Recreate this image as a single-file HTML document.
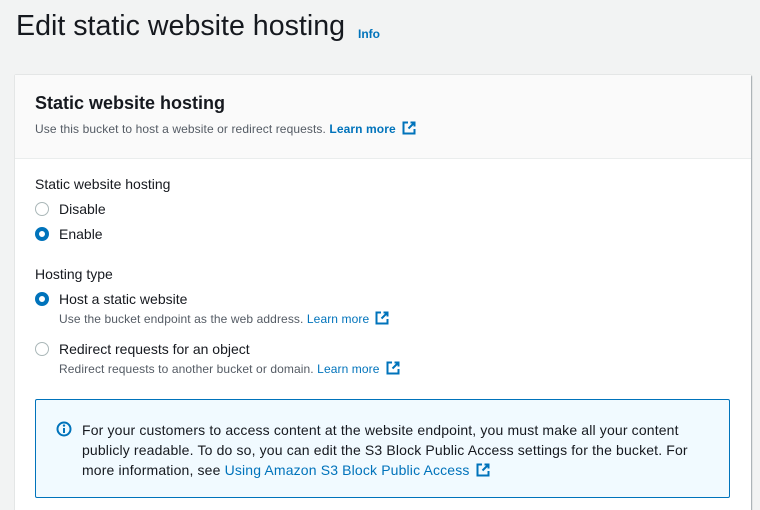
<!DOCTYPE html>
<html><head><meta charset="utf-8"><style>
*{margin:0;padding:0;box-sizing:border-box}
html,body{width:760px;height:510px;overflow:hidden}
body{background:#f2f3f3;font-family:"Liberation Sans",sans-serif;color:#16191f;position:relative}
.a{position:absolute;white-space:nowrap}
.card{position:absolute;left:15px;top:75px;width:736px;height:460px;background:#fff;box-shadow:1px 1px 1px rgba(0,28,36,.3),0 0 1px rgba(0,28,36,.3)}
.hdr{position:absolute;left:0;top:0;width:100%;height:84px;background:#fafafa;border-bottom:1px solid #eaeded}
.r{position:absolute;width:14px;height:14px;border-radius:50%;border:1px solid #aab7b8;background:#fff}
.r.on{border:4px solid #0073bb}
.lk{color:#0073bb}
.s{font-size:12px;color:#545b64;letter-spacing:.1px}
.ext{display:inline-block;vertical-align:-2px;margin-left:6px}
</style></head><body>
<div class="a" style="left:16px;top:10px;font-size:28.6px;">Edit static website hosting</div>
<div class="a lk" style="left:358px;top:27px;font-size:12px;font-weight:bold">Info</div>
<div class="card">
<div class="hdr"></div>
<div class="a" style="left:20px;top:18px;font-size:18px;font-weight:bold">Static website hosting</div>
<div class="a s" style="left:20px;top:46px">Use this bucket to host a website or redirect requests. <b class="lk">Learn more</b><svg class="ext" width="14" height="14" viewBox="0 0 14 14"><path d="M6 1.5H1.5v11h11V8M8.5 1.5h4v4M12.5 1.5L6.5 7.5" fill="none" stroke="#0073bb" stroke-width="2"/></svg></div>
<div class="a" style="left:20px;top:101px;font-size:14px">Static website hosting</div>
<div class="r" style="left:20px;top:127px"></div><div class="a" style="left:44px;top:126px;font-size:14px">Disable</div>
<div class="r on" style="left:20px;top:152px"></div><div class="a" style="left:44px;top:151px;font-size:14px">Enable</div>
<div class="a" style="left:20px;top:191px;font-size:14px">Hosting type</div>
<div class="r on" style="left:20px;top:217px"></div><div class="a" style="left:44px;top:216px;font-size:14px">Host a static website</div>
<div class="a s" style="left:44px;top:236px">Use the bucket endpoint as the web address. <span class="lk">Learn more</span><svg class="ext" width="14" height="14" viewBox="0 0 14 14"><path d="M6 1.5H1.5v11h11V8M8.5 1.5h4v4M12.5 1.5L6.5 7.5" fill="none" stroke="#0073bb" stroke-width="2"/></svg></div>
<div class="r" style="left:20px;top:267px"></div><div class="a" style="left:44px;top:266px;font-size:14px">Redirect requests for an object</div>
<div class="a s" style="left:44px;top:286px">Redirect requests to another bucket or domain. <span class="lk">Learn more</span><svg class="ext" width="14" height="14" viewBox="0 0 14 14"><path d="M6 1.5H1.5v11h11V8M8.5 1.5h4v4M12.5 1.5L6.5 7.5" fill="none" stroke="#0073bb" stroke-width="2"/></svg></div>
<div style="position:absolute;left:20px;top:324px;width:695px;height:99px;background:#f1faff;border:1px solid #0073bb;border-radius:2px"></div>
<svg class="a" style="left:41px;top:346px" width="16" height="16" viewBox="0 0 16 16"><circle cx="8" cy="8" r="6.5" fill="none" stroke="#0073bb" stroke-width="2"/><path d="M8 7v5" stroke="#0073bb" stroke-width="2"/><circle cx="8" cy="4.6" r="1.2" fill="#0073bb"/></svg>
<div class="a" style="left:67px;top:345px;font-size:14px;line-height:20px;letter-spacing:.15px">For your customers to access content at the website endpoint, you must make all your content<br>publicly readable. To do so, you can edit the S3 Block Public Access settings for the bucket. For<br>more information, see <span class="lk">Using Amazon S3 Block Public Access</span><svg class="ext" width="14" height="14" viewBox="0 0 14 14"><path d="M6 1.5H1.5v11h11V8M8.5 1.5h4v4M12.5 1.5L6.5 7.5" fill="none" stroke="#0073bb" stroke-width="2"/></svg></div>
</div>
</body></html>
